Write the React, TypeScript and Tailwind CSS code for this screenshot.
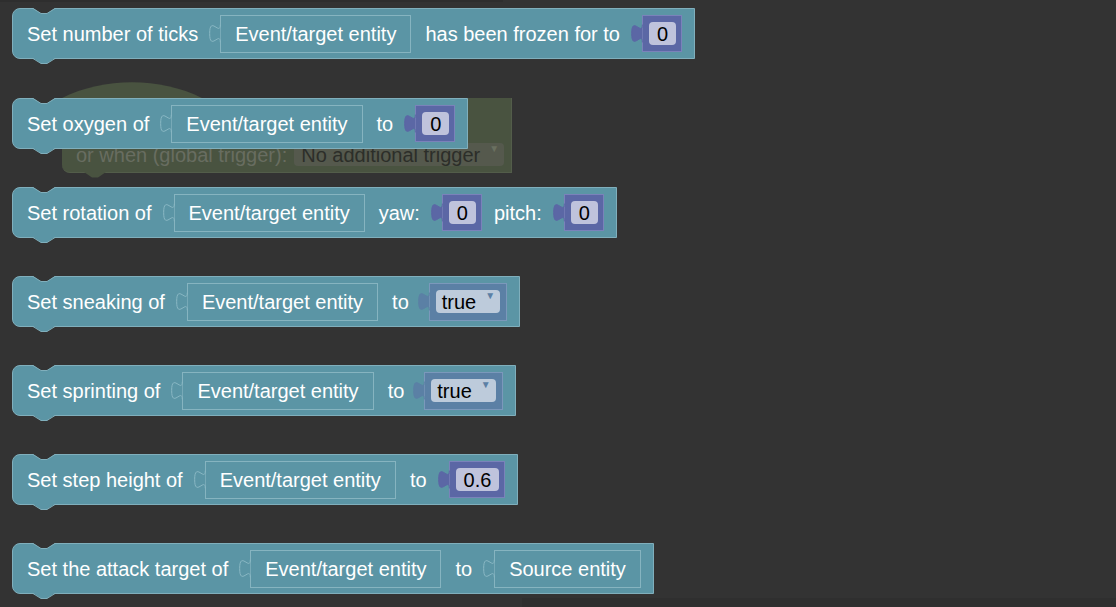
import React from 'react';

type Part =
  | { kind: 'label'; text: string }
  | { kind: 'entity'; text: string }
  | { kind: 'num'; value: string }
  | { kind: 'bool'; value: string };

interface BlockDef {
  mt: string;
  parts: Part[];
  z?: boolean;
}

const blocks: BlockDef[] = [
  {
    mt: 'mt-0',
    parts: [
      { kind: 'label', text: 'Set number of ticks' },
      { kind: 'entity', text: 'Event/target entity' },
      { kind: 'label', text: 'has been frozen for to' },
      { kind: 'num', value: '0' },
    ],
  },
  {
    mt: 'mt-[39px]',
    z: true,
    parts: [
      { kind: 'label', text: 'Set oxygen of' },
      { kind: 'entity', text: 'Event/target entity' },
      { kind: 'label', text: 'to' },
      { kind: 'num', value: '0' },
    ],
  },
  {
    mt: 'mt-[38px]',
    parts: [
      { kind: 'label', text: 'Set rotation of' },
      { kind: 'entity', text: 'Event/target entity' },
      { kind: 'label', text: 'yaw:' },
      { kind: 'num', value: '0' },
      { kind: 'label', text: 'pitch:' },
      { kind: 'num', value: '0' },
    ],
  },
  {
    mt: 'mt-[38px]',
    parts: [
      { kind: 'label', text: 'Set sneaking of' },
      { kind: 'entity', text: 'Event/target entity' },
      { kind: 'label', text: 'to' },
      { kind: 'bool', value: 'true' },
    ],
  },
  {
    mt: 'mt-[38px]',
    parts: [
      { kind: 'label', text: 'Set sprinting of' },
      { kind: 'entity', text: 'Event/target entity' },
      { kind: 'label', text: 'to' },
      { kind: 'bool', value: 'true' },
    ],
  },
  {
    mt: 'mt-[38px]',
    parts: [
      { kind: 'label', text: 'Set step height of' },
      { kind: 'entity', text: 'Event/target entity' },
      { kind: 'label', text: 'to' },
      { kind: 'num', value: '0.6' },
    ],
  },
  {
    mt: 'mt-[38px]',
    parts: [
      { kind: 'label', text: 'Set the attack target of' },
      { kind: 'entity', text: 'Event/target entity' },
      { kind: 'label', text: 'to' },
      { kind: 'entity', text: 'Source entity' },
    ],
  },
];

const TAB = 'M0,0 c0,10 -8,-8 -8,7.5 s8,-2.5 8,7.5';

// puzzle tab sticking out left of an input
function Tab({ fill, stroke }: { fill: string; stroke: string }) {
  return (
    <svg
      width="12"
      height="19"
      viewBox="-8.5 -0.5 9 16"
      preserveAspectRatio="none"
      className="relative z-10 -mr-px mt-[9px] shrink-0 self-start"
    >
      <path d={TAB + ' Z'} fill={fill} />
      <path d={TAB} fill="none" stroke={stroke} strokeWidth="1" vectorEffect="non-scaling-stroke" />
    </svg>
  );
}

function EntityInput({ text }: { text: string }) {
  return (
    <div className="flex h-[38px] items-stretch">
      <Tab fill="#5b95a5" stroke="#8ab8c4" />
      <div className="flex items-center border border-[#86b4c0] px-[14px] text-white">{text}</div>
    </div>
  );
}

function NumberInput({ value }: { value: string }) {
  return (
    <div className="flex h-[37px] items-stretch">
      <Tab fill="#5b67a5" stroke="#5b67a5" />
      <div className="flex items-center border border-[#7a82ba] bg-[#5b67a5] pl-[6px] pr-[5px]">
        <div className="flex h-[23px] items-center rounded-[4px] bg-[#bfc3dc] px-[8px] text-black">{value}</div>
      </div>
    </div>
  );
}

function BoolInput({ value }: { value: string }) {
  return (
    <div className="flex h-[38px] items-stretch">
      <Tab fill="#5b80a5" stroke="#5b80a5" />
      <div className="flex items-center border border-[#7b98bb] bg-[#5b80a5] px-[6px]">
        <div className="flex h-[23px] items-start rounded-[4px] bg-[#bdcbdb] pl-[6px] pr-[5px]">
          <span className="self-center text-black">{value}</span>
          <span className="ml-[9px] mt-[1px] text-[10px] leading-none text-[#5b80a5]">▼</span>
        </div>
      </div>
    </div>
  );
}

function Notches({ fill, stroke }: { fill: string; stroke: string }) {
  return (
    <>
      <svg width="22" height="7" className="absolute left-[20px] top-[-1px]">
        <path d="M0,0 L8,5.5 L14,5.5 L22,0 Z" fill="#333333" />
        <path d="M0,0.5 L8,5.5 L14,5.5 L22,0.5" fill="none" stroke={stroke} strokeWidth="1" />
      </svg>
      <svg width="22" height="7" className="absolute bottom-[-7px] left-[20px]">
        <path d="M0,0 L8,5.5 L14,5.5 L22,0 Z" fill={fill} />
        <path d="M0,0.5 L8,5.5 L14,5.5 L22,0.5" fill="none" stroke={stroke} strokeWidth="1" />
      </svg>
    </>
  );
}

function Block({ def }: { def: BlockDef }) {
  return (
    <div
      className={`relative flex h-[51px] items-center rounded-l-[8px] border border-[#80afbc] bg-[#5b95a5] pl-[14px] pr-[12px] text-white ${def.mt} ${def.z ? 'z-10' : ''}`}
    >
      <Notches fill="#5b95a5" stroke="#80afbc" />
      {def.parts.map((p, i) => {
        const last = i === def.parts.length - 1;
        const next = def.parts[i + 1];
        if (p.kind === 'label') {
          const mr = last ? '' : next && next.kind === 'bool' ? 'mr-[9px]' : 'mr-[11px]';
          return (
            <span key={i} className={`whitespace-nowrap ${mr}`}>
              {p.text}
            </span>
          );
        }
        const cls = last ? '' : p.kind === 'num' ? 'mr-[12px]' : 'mr-[14px]';
        return (
          <div key={i} className={cls}>
            {p.kind === 'entity' && <EntityInput text={p.text} />}
            {p.kind === 'num' && <NumberInput value={p.value} />}
            {p.kind === 'bool' && <BoolInput value={p.value} />}
          </div>
        );
      })}
    </div>
  );
}

// dimmed hat block lying behind "Set oxygen of"
function GhostHat() {
  return (
    <div className="absolute left-[62px] top-[98px] z-0 h-[75px] w-[450px] rounded-bl-[8px] border-r border-b border-[#535d4a] bg-[#495340]">
      <svg width="142" height="17" className="absolute left-0 top-[-16px]">
        <path d="M0,16 C42,-5 98,-5 140,16 L140,17 L0,17 Z" fill="#495340" />
      </svg>
      <svg width="22" height="7" className="absolute bottom-[-7px] left-[22px]">
        <path d="M0,0 L8,5.5 L14,5.5 L22,0 Z" fill="#495340" />
      </svg>
      <div className="absolute left-[14px] top-[45px] flex items-center">
        <span className="text-[#686d60]">or when (global trigger):</span>
        <div className="ml-[7px] flex h-[23px] w-[210px] items-start rounded-[4px] bg-[#55594d] pl-[7px]">
          <span className="self-center text-[#2c2e29]">No additional trigger</span>
          <span className="ml-auto mr-[5px] mt-[1px] text-[10px] leading-none text-[#6a7060]">▼</span>
        </div>
      </div>
    </div>
  );
}

export default function App() {
  return (
    <div
      className="relative h-[607px] w-[1116px] overflow-hidden bg-[#333333] text-[20px] leading-none"
      style={{ fontFamily: '"Liberation Sans", Arial, sans-serif' }}
    >
      <div className="absolute left-0 top-0 h-[2px] w-[503px] bg-[#2e2e2e]" />
      <div className="absolute bottom-0 left-[522px] right-0 h-[9px] bg-[#2f2f2f]" />
      <GhostHat />
      <div className="relative flex flex-col items-start pl-[12px] pt-[8px]">
        {blocks.map((b, i) => (
          <Block key={i} def={b} />
        ))}
      </div>
    </div>
  );
}
